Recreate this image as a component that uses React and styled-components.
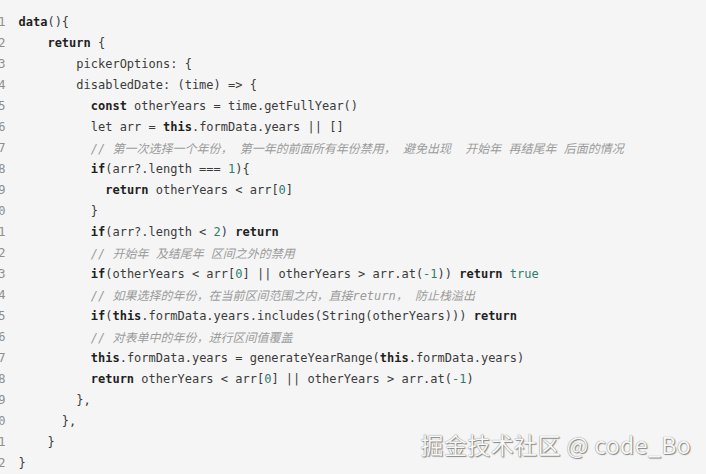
import React from 'react';
import styled, { createGlobalStyle } from 'styled-components';

const GlobalStyle = createGlobalStyle`
  html, body {
    margin: 0;
    padding: 0;
    background: #f5f5f5;
  }
`;

const Page = styled.div`
  position: relative;
  width: 706px;
  height: 474px;
  overflow: hidden;
  background: #f5f5f5;
`;

const Editor = styled.div`
  display: flex;
  flex-direction: column;
  padding-top: 11px;
  margin-left: -9px;
  font-family: "DejaVu Sans Mono", "Noto Sans CJK SC", monospace;
  font-size: 12px;
`;

const Line = styled.div`
  display: flex;
  align-items: center;
  height: 21px;
  gap: 13px;
`;

const LineNo = styled.span`
  width: 14.5px;
  flex-shrink: 0;
  text-align: right;
  color: #8f8f8f;
`;

const Code = styled.span`
  white-space: pre;
  color: #3b3b3b;
`;

const tokenColors = {
  kw: '#1f1f1f',
  num: '#2c7d70',
  cm: '#9b9b9b',
  fn: '#1f1f1f',
};

const Token = styled.span`
  color: ${(p) => tokenColors[p.$kind] || '#3b3b3b'};
  font-weight: ${(p) => (p.$kind === 'kw' || p.$kind === 'fn' ? 700 : 400)};
  font-style: ${(p) => (p.$kind === 'cm' ? 'italic' : 'normal')};
`;

const Watermark = styled.div`
  position: absolute;
  right: 15px;
  bottom: 13px;
  font-family: "Noto Sans CJK SC", "Noto Sans", sans-serif;
  font-size: 23px;
  letter-spacing: 0.4px;
  color: #f7f7f7;
  text-shadow: 0 0 1px #6a6a6a, 1px 1px 1px #8a8a8a;
  white-space: pre;
`;

const lines = [
  [['fn', 'data'], ['', '(){']],
  [['', '    '], ['kw', 'return'], ['', ' {']],
  [['', '        pickerOptions: {']],
  [['', '        disabledDate: (time) => {']],
  [['', '          '], ['kw', 'const'], ['', ' otherYears = time.getFullYear()']],
  [['', '          let arr = '], ['kw', 'this'], ['', '.formData.years || []']],
  [['', '          '], ['cm', '// 第一次选择一个年份， 第一年的前面所有年份禁用， 避免出现  开始年 再结尾年 后面的情况']],
  [['', '          '], ['kw', 'if'], ['', '(arr?.length === '], ['num', '1'], ['', '){']],
  [['', '            '], ['kw', 'return'], ['', ' otherYears < arr['], ['num', '0'], ['', ']']],
  [['', '          }']],
  [['', '          '], ['kw', 'if'], ['', '(arr?.length < '], ['num', '2'], ['', ') '], ['kw', 'return']],
  [['', '          '], ['cm', '// 开始年 及结尾年 区间之外的禁用']],
  [['', '          '], ['kw', 'if'], ['', '(otherYears < arr['], ['num', '0'], ['', '] || otherYears > arr.at('], ['num', '-1'], ['', ')) '], ['kw', 'return'], ['', ' '], ['num', 'true']],
  [['', '          '], ['cm', '// 如果选择的年份，在当前区间范围之内，直接return， 防止栈溢出']],
  [['', '          '], ['kw', 'if'], ['', '('], ['kw', 'this'], ['', '.formData.years.includes(String(otherYears))) '], ['kw', 'return']],
  [['', '          '], ['cm', '// 对表单中的年份，进行区间值覆盖']],
  [['', '          '], ['kw', 'this'], ['', '.formData.years = generateYearRange('], ['kw', 'this'], ['', '.formData.years)']],
  [['', '          '], ['kw', 'return'], ['', ' otherYears < arr['], ['num', '0'], ['', '] || otherYears > arr.at('], ['num', '-1'], ['', ')']],
  [['', '        },']],
  [['', '      },']],
  [['', '    }']],
  [['', '}']],
];

export default function App() {
  return (
    <Page>
      <GlobalStyle />
      <Editor>
        {lines.map((tokens, i) => (
          <Line key={i}>
            <LineNo>{i + 1}</LineNo>
            <Code>
              {tokens.map(([kind, text], j) => (
                <Token key={j} $kind={kind}>{text}</Token>
              ))}
            </Code>
          </Line>
        ))}
      </Editor>
      <Watermark>掘金技术社区 @ code_Bo</Watermark>
    </Page>
  );
}
